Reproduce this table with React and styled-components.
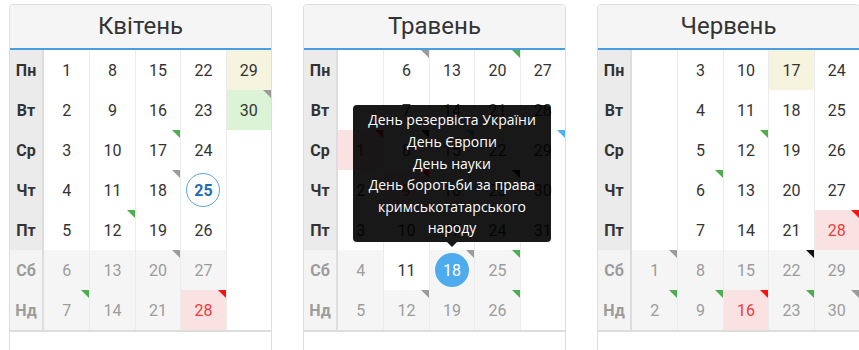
import styled, { createGlobalStyle } from "styled-components";

const GlobalStyle = createGlobalStyle`
  html, body {
    margin: 0;
    overflow: hidden;
    background: #fff;
  }
  body {
    font-family: Roboto, "Liberation Sans", sans-serif;
  }
`;

const DAY_NAMES = ["Пн", "Вт", "Ср", "Чт", "Пт", "Сб", "Нд"];

const MARK_COLORS = {
  gray: "#9b9b9b",
  green: "#4cae4f",
  red: "#ff1010",
  blue: "#4fb0ee",
  black: "#111",
};

const TONES = {
  beige: "#f6f4de",
  green: "#dcf3d5",
  pink: "#fbe2e2",
  white: "#fff",
};

const months = [
  {
    name: "Квітень",
    offset: 0,
    days: 30,
    tones: { 29: "beige", 30: "green", 28: "pink" },
    red: [28],
    marks: { 30: "gray", 17: "green", 18: "gray", 12: "green", 20: "gray", 7: "green", 28: "red" },
    today: 25,
  },
  {
    name: "Травень",
    offset: 2,
    days: 31,
    tones: { 1: "pink", 9: "pink", 11: "white" },
    red: [1, 9],
    marks: {
      6: "gray",
      20: "green",
      1: "red",
      8: "black",
      15: "blue",
      29: "blue",
      9: "red",
      23: "black",
      18: "gray",
      25: "green",
      12: "gray",
      26: "green",
    },
    selected: 18,
    tooltip: [
      "День резервіста України",
      "День Європи",
      "День науки",
      "День боротьби за права",
      "кримськотатарського",
      "народу",
    ],
  },
  {
    name: "Червень",
    offset: 5,
    days: 30,
    tones: { 17: "beige", 28: "pink", 16: "pink" },
    red: [28, 16],
    marks: {
      12: "green",
      6: "green",
      28: "red",
      1: "gray",
      22: "black",
      2: "green",
      9: "green",
      16: "red",
      23: "green",
      30: "gray",
    },
  },
];

const Page = styled.div`
  display: flex;
  gap: 31px;
  padding: 4px 0 0 9px;
  width: max-content;
`;

const Card = styled.div`
  flex: 0 0 263px;
  width: 263px;
  box-sizing: border-box;
  border: 1px solid #ddd;
  border-radius: 4px;
  background: #fff;
`;

const Header = styled.div`
  height: 43px;
  line-height: 43px;
  text-align: center;
  font-size: 24px;
  color: #333;
  background: #f5f5f5;
  border-bottom: 2px solid #4a9de0;
  border-radius: 3px 3px 0 0;
`;

const Grid = styled.div`
  display: grid;
  grid-template-columns: 34px repeat(5, 1fr);
  grid-auto-rows: 40px;
`;

const DayLabel = styled.div`
  display: flex;
  align-items: center;
  justify-content: center;
  font-size: 16px;
  font-weight: 700;
  border-right: 2px solid #ddd;
  background: ${(p) => (p.$weekend ? "#f4f4f4" : "#ebebeb")};
  color: ${(p) => (p.$weekend ? "#9c9c9c" : "#333")};
`;

const Cell = styled.div`
  position: relative;
  display: flex;
  align-items: center;
  justify-content: center;
  font-size: 16px;
  border-left: ${(p) => (p.$first ? "none" : "1px solid #ececec")};
  background: ${(p) => p.$bg};
  color: ${(p) => p.$color};
`;

const Mark = styled.span`
  position: absolute;
  top: 0;
  right: 0;
  width: 0;
  height: 0;
  border-top: 8px solid ${(p) => p.$color};
  border-left: 8px solid transparent;
`;

const Circle = styled.span`
  width: 34px;
  height: 34px;
  box-sizing: border-box;
  border-radius: 50%;
  display: flex;
  align-items: center;
  justify-content: center;
  border: 1px solid #5aa6e0;
  color: #1f6db3;
  font-weight: 700;
`;

const Selected = styled.span`
  width: 34px;
  height: 34px;
  border-radius: 50%;
  display: flex;
  align-items: center;
  justify-content: center;
  background: #4dabee;
  color: #fff;
`;

const Tooltip = styled.div`
  position: absolute;
  left: 50%;
  bottom: calc(100% + 3px);
  transform: translateX(-50%);
  z-index: 10;
  opacity: 0.9;
  padding-bottom: 5px;
`;

const TooltipInner = styled.div`
  width: 198px;
  box-sizing: border-box;
  padding: 4px 8px 3px;
  background: #000;
  color: #fff;
  border-radius: 4px;
  text-align: center;
  font-family: "Open Sans", "Noto Sans", sans-serif;
  font-size: 14px;
  line-height: 21.6px;
`;

const TooltipArrow = styled.span`
  position: absolute;
  bottom: 0;
  left: 50%;
  margin-left: -5px;
  border-top: 5px solid #000;
  border-left: 5px solid transparent;
  border-right: 5px solid transparent;
`;

const Footer = styled.div`
  height: 40px;
  border-top: 2px solid #ddd;
`;

const DateCell = ({ month, day, row, first }) => {
  const weekend = row >= 5;
  if (!day) return <Cell $first={first} $bg="#fff" />;

  const tone = month.tones[day];
  const bg = tone ? TONES[tone] : weekend ? "#f5f5f5" : "#fff";
  let color = weekend && tone !== "white" ? "#9c9c9c" : "#333";
  if (month.red?.includes(day)) color = "#ee3a3a";
  const mark = month.marks[day];

  let content = day;
  if (day === month.today) content = <Circle>{day}</Circle>;
  if (day === month.selected) content = <Selected>{day}</Selected>;

  return (
    <Cell $first={first} $bg={bg} $color={color}>
      {content}
      {mark && <Mark $color={MARK_COLORS[mark]} />}
      {day === month.selected && month.tooltip && (
        <Tooltip>
          <TooltipInner>
            {month.tooltip.map((line) => (
              <div key={line}>{line}</div>
            ))}
          </TooltipInner>
          <TooltipArrow />
        </Tooltip>
      )}
    </Cell>
  );
};

const MonthCard = ({ month }) => (
  <Card>
    <Header>{month.name}</Header>
    <Grid>
      {DAY_NAMES.map((label, row) => [
        <DayLabel key={label} $weekend={row >= 5}>
          {label}
        </DayLabel>,
        ...[0, 1, 2, 3, 4].map((col) => {
          const d = col * 7 + row - month.offset + 1;
          const day = d >= 1 && d <= month.days ? d : null;
          return (
            <DateCell
              key={`${label}-${col}`}
              month={month}
              day={day}
              row={row}
              first={col === 0}
            />
          );
        }),
      ])}
    </Grid>
    <Footer />
  </Card>
);

export default function App() {
  return (
    <>
      <GlobalStyle />
      <Page>
        {months.map((m) => (
          <MonthCard key={m.name} month={m} />
        ))}
      </Page>
    </>
  );
}
